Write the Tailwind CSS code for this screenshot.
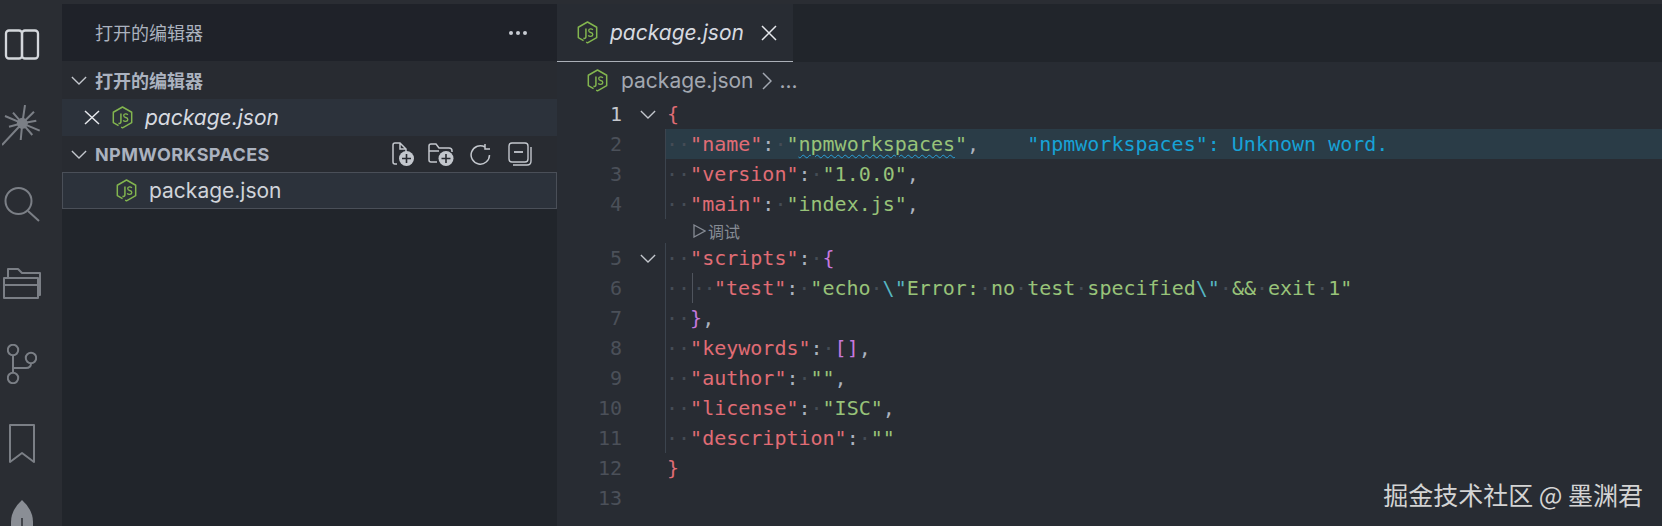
<!DOCTYPE html>
<html lang="en">
<head>
  <meta charset="utf-8" />
  <title>package.json</title>
  <script src="https://cdn.jsdelivr.net/npm/@tailwindcss/browser@4"></script>
</head>
<body class="bg-[#2a2d33] overflow-hidden">
  <svg class="hidden">
    <symbol id="js" viewBox="0 0 24 26">
      <path d="M7.5 22.2 L1.5 18.8 V7 L12 1 L22.5 7 V18.8 L12 24.8 L10.5 24" fill="none" stroke="currentColor" stroke-width="1.7" stroke-linejoin="round" />
      <path d="M10.2 8.5 V17.5 Q10.2 20.4 7.4 19.6" fill="none" stroke="currentColor" stroke-width="1.7" />
      <path d="M18.2 10 Q17 8.7 15.4 8.9 Q13.2 9.2 13.4 11 Q13.6 12.6 15.6 13 Q18.2 13.6 18.1 15.5 Q17.8 17.6 15.3 17.4 Q13.6 17.3 12.8 16.2" fill="none" stroke="currentColor" stroke-width="1.5" />
    </symbol>
    <symbol id="chev" viewBox="0 0 18 10">
      <path d="M1 1 L9 9 L17 1" fill="none" stroke="currentColor" stroke-width="1.5" />
    </symbol>
  </svg>

  <div class="h-[526px] flex pt-1 font-['Inter',sans-serif]">
    <!-- activity bar -->
    <nav class="w-[62px] h-[526px] shrink-0 -mt-1 pr-[18px] flex flex-col items-center text-[#7b7f86] overflow-hidden">
      <svg class="mt-[29px] shrink-0 text-[#d4d7dc]" width="36" height="31" viewBox="0 0 36 31" fill="none" stroke="currentColor" stroke-width="2.3"><rect x="2" y="1.5" width="16" height="28" rx="3" /><rect x="18" y="1.5" width="16" height="28" rx="3" /></svg>
      <svg class="mt-[45px] shrink-0" width="40" height="42" viewBox="0 0 40 42" fill="none" stroke="currentColor" stroke-width="2">
        <circle cx="20.3" cy="18.3" r="5.5" fill="currentColor" stroke="none" />
        <path d="M20.3 18.3 L23 0 M20.3 18.3 L32 6.7 M20.3 18.3 L34.3 15.7 M20.3 18.3 L37.7 25.7 M20.3 18.3 L30.3 30 M20.3 18.3 L18.7 35 M20.3 18.3 L0 40 M20.3 18.3 L7 21.7 M20.3 18.3 L3 11 M20.3 18.3 L11 7.7" />
      </svg>
      <svg class="mt-[39px] shrink-0" width="36" height="36" viewBox="0 0 36 36" fill="none" stroke="currentColor" stroke-width="2"><circle cx="14.5" cy="15" r="13" /><path d="M24 25 L35 35" /></svg>
      <svg class="mt-[45px] shrink-0" width="38" height="33" viewBox="0 0 38 33" fill="none" stroke="currentColor" stroke-width="2" stroke-linejoin="round"><path d="M1 31 V11 H35 V31 Z" /><path d="M1 18 H35" /><path d="M5 10 V2 H15 L19 6 H37 V28 H35" /></svg>
      <svg class="mt-[44px] shrink-0" width="30" height="40" viewBox="0 0 30 40" fill="none" stroke="currentColor" stroke-width="2"><circle cx="6" cy="6" r="5.2" /><circle cx="6" cy="34" r="5.2" /><circle cx="24" cy="14" r="5.2" /><path d="M6 11.2 V28.8 M6 24 H19 Q24 24 24 19.2" /></svg>
      <svg class="mt-[40px] shrink-0" width="26" height="40" viewBox="0 0 26 40" fill="none" stroke="currentColor" stroke-width="2" stroke-linejoin="round"><path d="M1 1 H25 V38 L13 29 L1 38 Z" /></svg>
      <svg class="mt-[36px] shrink-0" width="22" height="30" viewBox="0 0 22 30"><path d="M11 0 Q22 10 22 22 V30 H0 V22 Q0 10 11 0 Z" fill="#8a8e95" /><path d="M11 18 V30" stroke="#2a2d33" stroke-width="1.5" /></svg>
    </nav>

    <!-- sidebar -->
    <aside class="w-[495px] shrink-0 bg-[#21252b] flex flex-col text-[18px] text-[#abb2bf]">
      <div class="h-[57px] shrink-0 bg-[#1f2229] flex items-center justify-between pl-[33px] pr-[30px] font-['Noto_Sans_CJK_SC',sans-serif]">
        <span>打开的编辑器</span>
        <span class="flex gap-[3px]"><i class="w-[4px] h-[4px] rounded-full bg-[#c8ccd2]"></i><i class="w-[4px] h-[4px] rounded-full bg-[#c8ccd2]"></i><i class="w-[4px] h-[4px] rounded-full bg-[#c8ccd2]"></i></span>
      </div>
      <div class="h-[38px] shrink-0 bg-[#282b31] flex items-center pl-[9px] gap-[8px] font-bold font-['Noto_Sans_CJK_SC',sans-serif]">
        <svg class="w-[16px] h-[9px] text-[#c3c7cd]"><use href="#chev" /></svg>
        <span>打开的编辑器</span>
      </div>
      <div class="h-[37px] shrink-0 bg-[#2c323b] flex items-center pl-[22px] text-[21px] italic text-[#d7dae0]">
        <svg class="w-[16px] h-[15px] text-[#e6e8ec]" viewBox="0 0 16 15" fill="none" stroke="currentColor" stroke-width="1.5"><path d="M1 1 L15 14 M15 1 L1 14" /></svg>
        <svg class="w-[21px] h-[23px] ml-[12px] text-[#83b64f]"><use href="#js" /></svg>
        <span class="ml-[12px]">package.json</span>
      </div>
      <div class="h-[36px] shrink-0 bg-[#282b31] flex items-center pl-[9px] pr-[25px] text-[18px] font-bold tracking-[0.4px]">
        <svg class="w-[16px] h-[9px] text-[#c3c7cd]"><use href="#chev" /></svg>
        <span class="ml-[8px] grow">NPMWORKSPACES</span>
        <span class="flex items-center text-[#c3c7cd]">
          <svg width="22" height="24" viewBox="0 0 22 24" fill="none" stroke="currentColor" stroke-width="1.5"><path d="M5 22 H3 Q1 22 1 20 V3 Q1 1 3 1 H8 L14 7 V10 M8 1 V7 H14" /><circle cx="14.5" cy="16.5" r="7.5" fill="currentColor" stroke="none" /><path d="M14.5 12 V21 M10 16.5 H19" stroke="#282b31" stroke-width="1.6" /></svg>
          <svg class="ml-[14px]" width="26" height="24" viewBox="0 0 26 24" fill="none" stroke="currentColor" stroke-width="1.5"><path d="M9 20 H3 Q1 20 1 18 V4 Q1 2 3 2 H8 L11 6 H21 Q24 6 24 9 V10 M1 9 H11" /><circle cx="18" cy="16.5" r="7.5" fill="currentColor" stroke="none" /><path d="M18 12 V21 M13.5 16.5 H22.5" stroke="#282b31" stroke-width="1.6" /></svg>
          <svg class="ml-[16px]" width="21" height="21" viewBox="0 0 21 21" fill="none" stroke="currentColor" stroke-width="1.5"><path d="M19.5 11 A9.2 9.2 0 1 1 15 3 M15 0 V5 H20" /></svg>
          <svg class="ml-[17px]" width="24" height="24" viewBox="0 0 24 24" fill="none" stroke="currentColor" stroke-width="1.4"><rect x="1" y="1" width="19" height="19" rx="3" /><path d="M6 10 H15" stroke-width="1.8" /><path d="M23 5 V19 Q23 23 19 23 H5" /></svg>
        </span>
      </div>
      <div class="h-[37px] shrink-0 bg-[#2c323b] border border-[#4a4f58] flex items-center pl-[53px] text-[21px] text-[#d0d4da]">
        <svg class="w-[21px] h-[23px] text-[#83b64f]"><use href="#js" /></svg>
        <span class="ml-[12px]">package.json</span>
      </div>
    </aside>

    <!-- editor -->
    <main class="grow min-w-0 flex flex-col bg-[#282c33]">
      <div class="h-[58px] shrink-0 bg-[#21252b] flex">
        <div class="w-[236px] bg-[#282c33] border-b border-[#abb0b8] flex items-center pl-[20px] text-[21px] italic text-[#d7dae0]">
          <svg class="w-[21px] h-[23px] text-[#83b64f]"><use href="#js" /></svg>
          <span class="ml-[12px]">package.json</span>
          <svg class="ml-[17px] w-[16px] h-[16px] text-[#e6e8ec]" viewBox="0 0 16 16" fill="none" stroke="currentColor" stroke-width="1.5"><path d="M1 1 L15 15 M15 1 L1 15" /></svg>
        </div>
      </div>
      <div class="h-[37px] shrink-0 flex items-center pl-[30px] text-[21px] text-[#a3a8b1]">
        <svg class="w-[21px] h-[23px] text-[#83b64f]"><use href="#js" /></svg>
        <span class="ml-[13px]">package.json</span>
        <svg class="ml-[8px] w-[10px] h-[18px]" viewBox="0 0 10 18" fill="none" stroke="currentColor" stroke-width="1.5"><path d="M1 1 L9 9 L1 17" /></svg>
        <span class="ml-[8px]">...</span>
      </div>

      <div class="font-['DejaVu_Sans_Mono',monospace] text-[20px] leading-[30px] whitespace-nowrap text-[#abb2bf]">
        <div class="flex h-[30px]"><span class="w-[65px] text-right text-[#c5c8ce]">1</span><span class="w-[45px] flex items-center justify-center pl-[7px]"><svg class="w-[16px] h-[9px] text-[#c3c7cd]"><use href="#chev" /></svg></span><span class="text-[#e06c75]">{</span></div>

        <div class="flex h-[30px]"><span class="w-[65px] text-right text-[#4b5059]">2</span><span class="w-[45px]"></span><span class="grow border-l border-[#3c444e] bg-[#2a3c47] -ml-[2px]"><span class="text-[#454c56]">··</span><span class="text-[#e06c75]">"name"</span>:<span class="text-[#454c56]">·</span><span class="text-[#98c379]">"</span><span class="text-[#98c379] underline decoration-wavy decoration-[#2aa0d8] decoration-1 underline-offset-[3px]">npmworkspaces</span><span class="text-[#98c379]">"</span>,<span class="ml-[48px] text-[#17a2d6]">"npmworkspaces": Unknown word.</span></span></div>

        <div class="flex h-[30px]"><span class="w-[65px] text-right text-[#4b5059]">3</span><span class="w-[45px]"></span><span class="border-l border-[#3c444e] -ml-[2px]"><span class="text-[#454c56]">··</span><span class="text-[#e06c75]">"version"</span>:<span class="text-[#454c56]">·</span><span class="text-[#98c379]">"1.0.0"</span>,</span></div>

        <div class="flex h-[30px]"><span class="w-[65px] text-right text-[#4b5059]">4</span><span class="w-[45px]"></span><span class="border-l border-[#3c444e] -ml-[2px]"><span class="text-[#454c56]">··</span><span class="text-[#e06c75]">"main"</span>:<span class="text-[#454c56]">·</span><span class="text-[#98c379]">"index.js"</span>,</span></div>

        <div class="h-[24px] pl-[136px] flex items-center gap-[2px] text-[16px] text-[#868b94] font-['Noto_Sans_CJK_SC',sans-serif]">
          <svg width="13" height="14" viewBox="0 0 13 14" fill="none" stroke="currentColor" stroke-width="1.3"><path d="M1 1 L12 7 L1 13 Z" /></svg>
          <span>调试</span>
        </div>

        <div class="flex h-[30px]"><span class="w-[65px] text-right text-[#4b5059]">5</span><span class="w-[45px] flex items-center justify-center pl-[7px]"><svg class="w-[16px] h-[9px] text-[#c3c7cd]"><use href="#chev" /></svg></span><span class="border-l border-[#3c444e] -ml-[2px]"><span class="text-[#454c56]">··</span><span class="text-[#e06c75]">"scripts"</span>:<span class="text-[#454c56]">·</span><span class="text-[#c678dd]">{</span></span></div>

        <div class="flex h-[30px]"><span class="w-[65px] text-right text-[#4b5059]">6</span><span class="w-[45px]"></span><span class="border-l border-[#3c444e] -ml-[2px] flex"><span class="text-[#454c56] w-[26px]">··</span><span class="border-l border-[#4f545d] w-[22px] tracking-[-1.5px] text-[#454c56]">··</span><span><span class="text-[#e06c75]">"test"</span>:<span class="text-[#454c56]">·</span><span class="text-[#98c379]">"echo<span class="text-[#454c56]">·</span><span class="text-[#56b6c2]">\"</span>Error:<span class="text-[#454c56]">·</span>no<span class="text-[#454c56]">·</span>test<span class="text-[#454c56]">·</span>specified<span class="text-[#56b6c2]">\"</span><span class="text-[#454c56]">·</span>&amp;&amp;<span class="text-[#454c56]">·</span>exit<span class="text-[#454c56]">·</span>1"</span></span></span></div>

        <div class="flex h-[30px]"><span class="w-[65px] text-right text-[#4b5059]">7</span><span class="w-[45px]"></span><span class="border-l border-[#3c444e] -ml-[2px]"><span class="text-[#454c56]">··</span><span class="text-[#c678dd]">}</span>,</span></div>

        <div class="flex h-[30px]"><span class="w-[65px] text-right text-[#4b5059]">8</span><span class="w-[45px]"></span><span class="border-l border-[#3c444e] -ml-[2px]"><span class="text-[#454c56]">··</span><span class="text-[#e06c75]">"keywords"</span>:<span class="text-[#454c56]">·</span><span class="text-[#c678dd]">[]</span>,</span></div>

        <div class="flex h-[30px]"><span class="w-[65px] text-right text-[#4b5059]">9</span><span class="w-[45px]"></span><span class="border-l border-[#3c444e] -ml-[2px]"><span class="text-[#454c56]">··</span><span class="text-[#e06c75]">"author"</span>:<span class="text-[#454c56]">·</span><span class="text-[#98c379]">""</span>,</span></div>

        <div class="flex h-[30px]"><span class="w-[65px] text-right text-[#4b5059]">10</span><span class="w-[45px]"></span><span class="border-l border-[#3c444e] -ml-[2px]"><span class="text-[#454c56]">··</span><span class="text-[#e06c75]">"license"</span>:<span class="text-[#454c56]">·</span><span class="text-[#98c379]">"ISC"</span>,</span></div>

        <div class="flex h-[30px]"><span class="w-[65px] text-right text-[#4b5059]">11</span><span class="w-[45px]"></span><span class="border-l border-[#3c444e] -ml-[2px]"><span class="text-[#454c56]">··</span><span class="text-[#e06c75]">"description"</span>:<span class="text-[#454c56]">·</span><span class="text-[#98c379]">""</span></span></div>

        <div class="flex h-[30px]"><span class="w-[65px] text-right text-[#4b5059]">12</span><span class="w-[45px]"></span><span class="text-[#e06c75]">}</span></div>

        <div class="flex h-[30px]"><span class="w-[65px] text-right text-[#4b5059]">13</span></div>
      </div>
    </main>
  </div>

  <!-- watermark -->
  <div class="absolute right-[19px] bottom-[16px] text-[25px] leading-[32px] text-[#d4d4d4] font-['Noto_Sans_CJK_SC',sans-serif]">掘金技术社区 @ 墨渊君</div>
</body>
</html>
